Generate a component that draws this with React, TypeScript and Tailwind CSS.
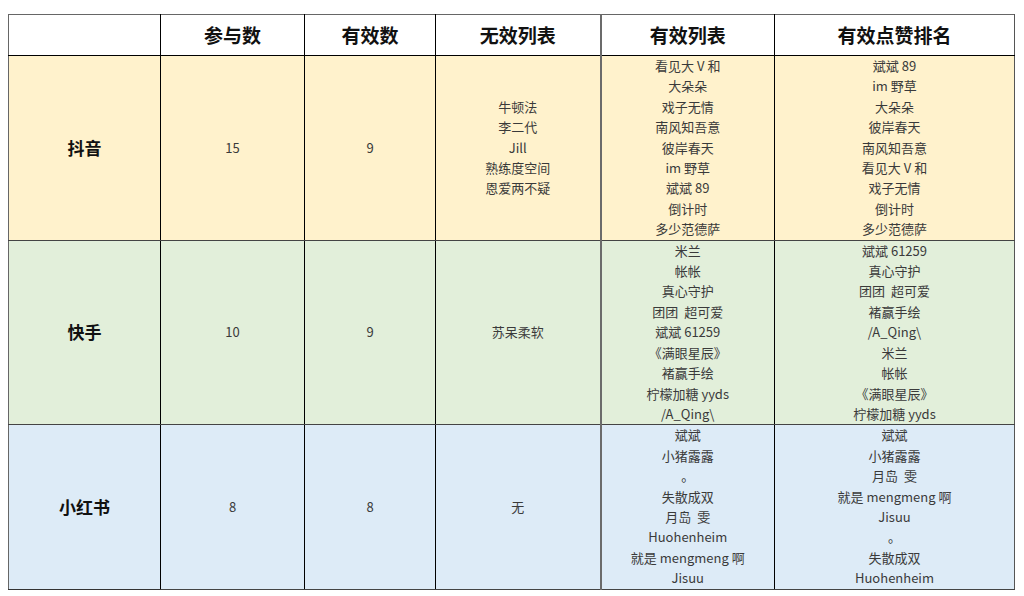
import React from 'react';

type Row = {
  name: string;
  total: string;
  valid: string;
  invalid: string[];
  validList: string[];
  ranking: string[];
  bg: string;
};

const rows: Row[] = [
  {
    name: '抖音',
    total: '15',
    valid: '9',
    invalid: ['牛顿法', '李二代', 'Jill', '熟练度空间', '恩爱两不疑'],
    validList: ['看见大 V 和', '大朵朵', '戏子无情', '南风知吾意', '彼岸春天', 'im 野草', '斌斌 89', '倒计时', '多少范德萨'],
    ranking: ['斌斌 89', 'im 野草', '大朵朵', '彼岸春天', '南风知吾意', '看见大 V 和', '戏子无情', '倒计时', '多少范德萨'],
    bg: 'bg-[#fff2cc]',
  },
  {
    name: '快手',
    total: '10',
    valid: '9',
    invalid: ['苏呆柔软'],
    validList: ['米兰', '帐帐', '真心守护', '团团  超可爱', '斌斌 61259', '《满眼星辰》', '褚赢手绘', '柠檬加糖 yyds', '/A_Qing\\'],
    ranking: ['斌斌 61259', '真心守护', '团团  超可爱', '褚赢手绘', '/A_Qing\\', '米兰', '帐帐', '《满眼星辰》', '柠檬加糖 yyds'],
    bg: 'bg-[#e2efda]',
  },
  {
    name: '小红书',
    total: '8',
    valid: '8',
    invalid: ['无'],
    validList: ['斌斌', '小猪露露', '。', '失散成双', '月岛  雯', 'Huohenheim', '就是 mengmeng 啊', 'Jisuu'],
    ranking: ['斌斌', '小猪露露', '月岛  雯', '就是 mengmeng 啊', 'Jisuu', '。', '失散成双', 'Huohenheim'],
    bg: 'bg-[#ddebf7]',
  },
];

const headers = ['', '参与数', '有效数', '无效列表', '有效列表', '有效点赞排名'];
const widths = ['w-[152px]', 'w-[144px]', 'w-[131px]', 'w-[165px]', 'w-[174px]', 'w-[240px]'];

function Lines({ items }: { items: string[] }) {
  return (
    <div className="flex flex-col items-center">
      {items.map((t, i) => (
        <div key={i} className="whitespace-pre">
          {t}
        </div>
      ))}
    </div>
  );
}

export default function App() {
  return (
    <div
      className="w-[1024px] h-[596px] bg-white pt-[14px] pl-[8px]"
      style={{ fontFamily: '"Noto Sans CJK SC", "Noto Sans", sans-serif' }}
    >
      <table className="border-collapse table-fixed w-[1007px]">
        <thead>
          <tr className="h-[41px]">
            {headers.map((h, i) => (
              <th
                key={i}
                className={`${widths[i]} border border-black border-t-[#666] text-[19px] font-bold text-[#111] text-center p-0 ${i === 0 ? 'border-l-[#666]' : ''} ${i === 5 ? 'border-r-[#555]' : ''} ${i === 3 ? 'border-r-[#6b6b6b] border-r-2' : ''}`}
              >
                {h}
              </th>
            ))}
          </tr>
        </thead>
        <tbody>
          {rows.map((r, ri) => (
            <tr key={r.name} className={`${r.bg} text-[13px] leading-[20.4px] text-[#3a3a3a]`}>
              <td className={`border border-black border-y-[#444] border-l-[#666] text-center p-0 text-[17px] font-bold text-[#111] ${ri === 2 ? 'border-b-[#333]' : ''}`}>{r.name}</td>
              <td className="border border-black border-y-[#444] text-center p-0">{r.total}</td>
              <td className="border border-black border-y-[#444] text-center p-0">{r.valid}</td>
              <td className="border border-black border-y-[#444] border-r-[#6b6b6b] border-r-2 text-center p-0">
                <Lines items={r.invalid} />
              </td>
              <td className="border border-black border-y-[#444] text-center p-0">
                <Lines items={r.validList} />
              </td>
              <td className="border border-black border-y-[#444] border-r-[#555] text-center p-0">
                <Lines items={r.ranking} />
              </td>
            </tr>
          ))}
        </tbody>
      </table>
    </div>
  );
}
